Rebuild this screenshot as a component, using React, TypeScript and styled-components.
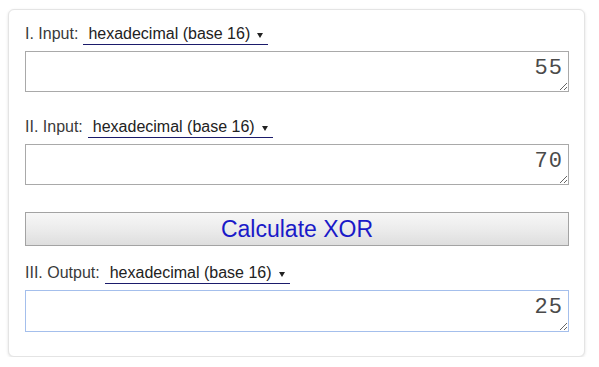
import React from 'react';
import styled, { createGlobalStyle } from 'styled-components';

const GlobalStyle = createGlobalStyle`
  body {
    margin: 0;
    background: #ffffff;
    font-family: 'Liberation Sans', Arial, sans-serif;
  }
`;

// карточка калькулятора
const Card = styled.div`
  box-sizing: border-box;
  margin: 9px 0 0 8px;
  width: 577px;
  height: 348px;
  padding: 15px 15px 0 16px;
  background: #fff;
  border: 1px solid #e4e4e4;
  border-radius: 6px;
  box-shadow: 0 1px 3px rgba(0, 0, 0, 0.12);
  display: flex;
  flex-direction: column;
`;

const LabelRow = styled.div<{ $top: number }>`
  display: flex;
  align-items: flex-end;
  gap: 5px;
  margin-top: ${(p) => p.$top}px;
  height: 20px;
`;

const Label = styled.span`
  font-size: 16px;
  line-height: 18px;
  padding-bottom: 2px;
  color: #3a3a3a;
`;

const Select = styled.div`
  box-sizing: border-box;
  display: flex;
  align-items: center;
  gap: 7px;
  height: 20px;
  padding: 0 5px 1px 5px;
  border-bottom: 1px solid #1b1b6b;
  font-size: 16px;
  line-height: 18px;
  color: #222;
`;

// стрелка выпадающего списка
const Arrow = styled.span`
  width: 0;
  height: 0;
  margin-top: 2px;
  border-left: 3.5px solid transparent;
  border-right: 3.5px solid transparent;
  border-top: 5px solid #222;
`;

const Field = styled.textarea<{ $active?: boolean; $h: number }>`
  box-sizing: border-box;
  display: block;
  margin-top: 6px;
  width: 544px;
  height: ${(p) => p.$h}px;
  padding: 5px 5px 0 5px;
  border: 1px solid ${(p) => (p.$active ? '#a4bfec' : '#a9a9a9')};
  border-radius: 0;
  outline: none;
  resize: vertical;
  text-align: right;
  font-family: 'Liberation Mono', 'Courier New', monospace;
  font-size: 22px;
  line-height: 24px;
  letter-spacing: 1px;
  color: #4a4a4a;
  background: #fff;
`;

const CalcButton = styled.button`
  box-sizing: border-box;
  margin-top: 27px;
  width: 544px;
  height: 34px;
  padding: 0;
  border: 1px solid #a3a3a3;
  border-radius: 0;
  background: linear-gradient(to bottom, #f7f7f7 0%, #ececec 50%, #dedede 100%);
  font-family: 'Liberation Sans', Arial, sans-serif;
  font-size: 23px;
  color: #1a1ac8;
  cursor: pointer;
`;

interface BlockProps {
  title: string;
  value: string;
  top: number;
  height: number;
  active?: boolean;
}

const Block: React.FC<BlockProps> = ({ title, value, top, height, active }) => (
  <>
    <LabelRow $top={top}>
      <Label>{title}</Label>
      <Select>
        hexadecimal (base 16)
        <Arrow />
      </Select>
    </LabelRow>
    <Field $h={height} $active={active} defaultValue={value} spellCheck={false} />
  </>
);

const App: React.FC = () => {
  return (
    <>
      <GlobalStyle />
      <Card>
        <Block title="I. Input:" value="55" top={0} height={41} />
        <Block title="II. Input:" value="70" top={26} height={41} />
        <CalcButton>Calculate XOR</CalcButton>
        <Block title="III. Output:" value="25" top={18} height={42} active />
      </Card>
    </>
  );
};

export default App;
